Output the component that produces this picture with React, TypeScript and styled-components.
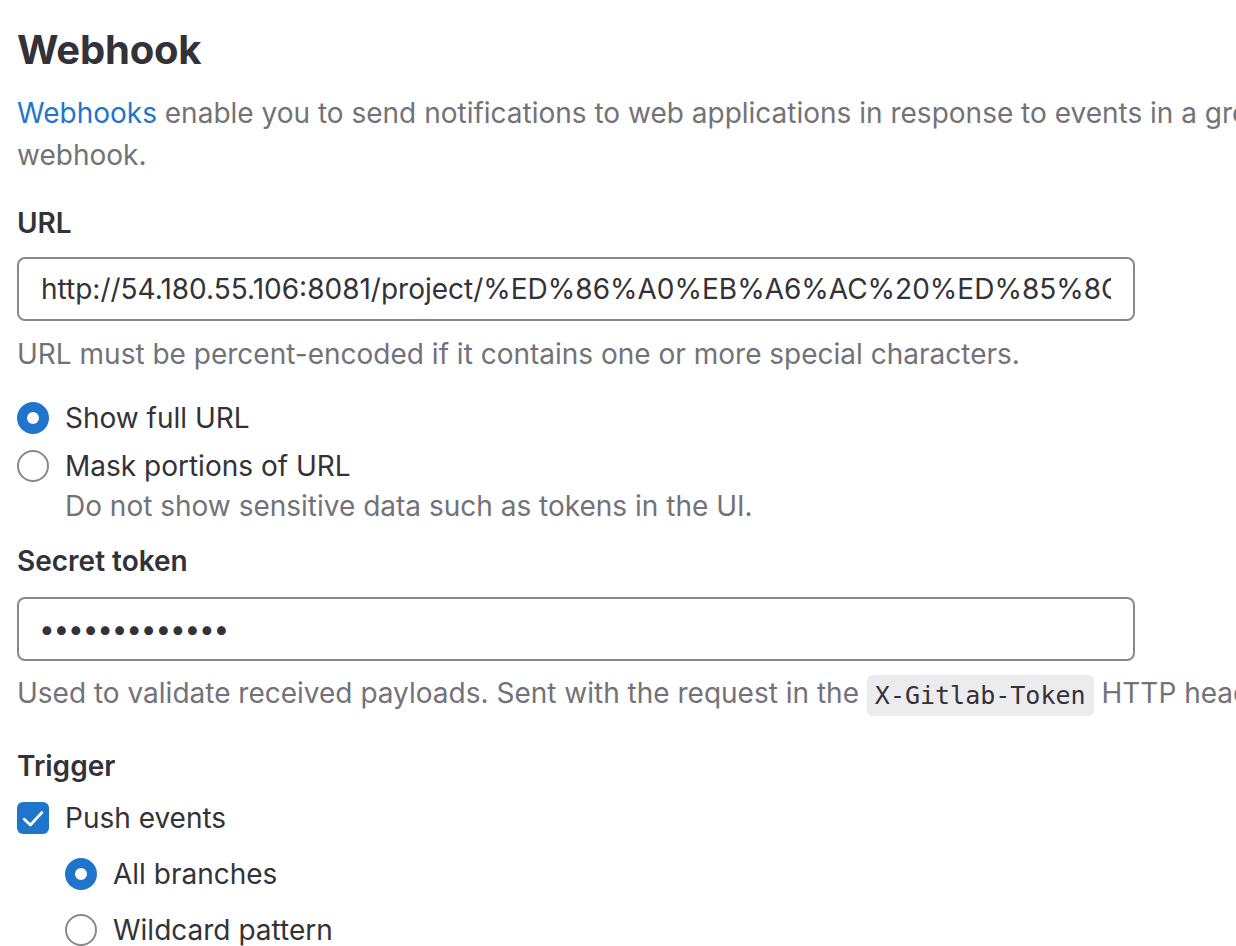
import React from "react";
import styled, { createGlobalStyle } from "styled-components";

const GlobalStyle = createGlobalStyle`
  html, body {
    margin: 0;
    padding: 0;
    overflow: hidden;
    background: #ffffff;
  }
  body {
    font-family: Inter, "Noto Sans", "Liberation Sans", sans-serif;
    color: #333238;
    -webkit-font-smoothing: antialiased;
  }
  * { box-sizing: border-box; }
`;

const Page = styled.main`
  width: 2200px;
  padding: 26px 0 0 17px;
  font-size: 28px;
  line-height: 42px;
`;

const Title = styled.h1`
  margin: 0;
  font-size: 40px;
  line-height: 48px;
  font-weight: 700;
  color: #333238;
  letter-spacing: -0.2px;
`;

const Lead = styled.p`
  margin: 18px 0 0;
  color: #737278;
  white-space: nowrap;
`;

const Link = styled.a`
  color: #1f75cb;
  text-decoration: none;
`;

const Label = styled.label<{ $top: number; $bottom?: number }>`
  display: block;
  margin-top: ${(p) => p.$top}px;
  margin-bottom: ${(p) => p.$bottom ?? 13}px;
  font-weight: 600;
  color: #333238;
`;

const TextInput = styled.input`
  display: block;
  width: 1118px;
  height: 64px;
  margin: 0;
  padding: 0 22px;
  border: 2px solid #89888d;
  border-radius: 8px;
  background: #ffffff;
  font-family: Inter, "Noto Sans", "Liberation Sans", sans-serif;
  font-size: 28px;
  color: #333238;
  outline: none;
  &[type="password"] {
    letter-spacing: -1.2px;
    padding-left: 20px;
  }
`;

const Help = styled.p<{ $top?: number }>`
  margin: ${(p) => p.$top ?? 12}px 0 0;
  color: #737278;
  white-space: nowrap;
`;

const Code = styled.code`
  display: inline-block;
  font-family: "DejaVu Sans Mono", "Liberation Mono", monospace;
  font-size: 25px;
  line-height: 41px;
  padding: 0 8px;
  background: #ececef;
  color: #333238;
  border-radius: 6px;
  vertical-align: middle;
`;

const OptionList = styled.div<{ $top: number; $indent?: number; $gap: number }>`
  display: flex;
  flex-direction: column;
  gap: ${(p) => p.$gap}px;
  margin-top: ${(p) => p.$top}px;
  padding-left: ${(p) => p.$indent ?? 0}px;
`;

const Option = styled.div`
  display: flex;
  flex-direction: column;
`;

const OptionRow = styled.label`
  display: flex;
  align-items: center;
  gap: 16px;
  height: 42px;
  color: #333238;
  cursor: pointer;
`;

const OptionHelp = styled.span`
  padding-left: 48px;
  line-height: 38px;
  color: #737278;
  white-space: nowrap;
`;

const RadioMark = styled.span<{ $checked?: boolean }>`
  position: relative;
  flex: none;
  width: 32px;
  height: 32px;
  border-radius: 50%;
  background: ${(p) => (p.$checked ? "#1f75cb" : "#ffffff")};
  border: ${(p) => (p.$checked ? "none" : "2px solid #89888d")};
  &::after {
    content: "";
    display: ${(p) => (p.$checked ? "block" : "none")};
    position: absolute;
    left: 50%;
    top: 50%;
    width: 12px;
    height: 12px;
    margin: -6px 0 0 -6px;
    border-radius: 50%;
    background: #ffffff;
  }
`;

const CheckMark = styled.span`
  flex: none;
  display: flex;
  align-items: center;
  justify-content: center;
  width: 32px;
  height: 32px;
  border-radius: 6px;
  background: #1f75cb;
`;

function Radio({ checked, children }: { checked?: boolean; children: React.ReactNode }) {
  return (
    <OptionRow>
      <RadioMark $checked={checked} />
      {children}
    </OptionRow>
  );
}

function Checkbox({ children }: { children: React.ReactNode }) {
  return (
    <OptionRow>
      <CheckMark>
        <svg width="32" height="32" viewBox="0 0 16 16" fill="none">
          <path d="M3.6 8.6l3.1 2.9 5.7-6.2" stroke="#ffffff" strokeWidth="1.4" strokeLinecap="round" strokeLinejoin="round" />
        </svg>
      </CheckMark>
      {children}
    </OptionRow>
  );
}

export default function App() {
  return (
    <>
      <GlobalStyle />
      <Page>
        <Title>Webhook</Title>
        <Lead>
          <Link href="#">Webhooks</Link> enable you to send notifications to web applications in response to events in a group or project. We recommend using an integration in preference to a
          <br />
          webhook.
        </Lead>

        <Label $top={26} htmlFor="url">URL</Label>
        <TextInput
          id="url"
          readOnly
          value="http://54.180.55.106:8081/project/%ED%86%A0%EB%A6%AC%20%ED%85%8C%EC%8A%A4%ED%8A%B8"
        />
        <Help>URL must be percent-encoded if it contains one or more special characters.</Help>

        <OptionList $top={22} $gap={6}>
          <Option>
            <Radio checked>Show full URL</Radio>
          </Option>
          <Option>
            <Radio>Mask portions of URL</Radio>
            <OptionHelp>Do not show sensitive data such as tokens in the UI.</OptionHelp>
          </Option>
        </OptionList>

        <Label $top={15} $bottom={15} htmlFor="token">Secret token</Label>
        <TextInput id="token" type="password" readOnly value="abcdefghijklm" />
        <Help $top={11}>
          Used to validate received payloads. Sent with the request in the <Code>X-Gitlab-Token</Code> HTTP header.
        </Help>

        <Label $top={29} as="div">Trigger</Label>
        <OptionList $top={-3} $gap={0}>
          <Checkbox>Push events</Checkbox>
        </OptionList>
        <OptionList $top={14} $gap={14} $indent={48}>
          <Radio checked>All branches</Radio>
          <Radio>Wildcard pattern</Radio>
        </OptionList>
      </Page>
    </>
  );
}
